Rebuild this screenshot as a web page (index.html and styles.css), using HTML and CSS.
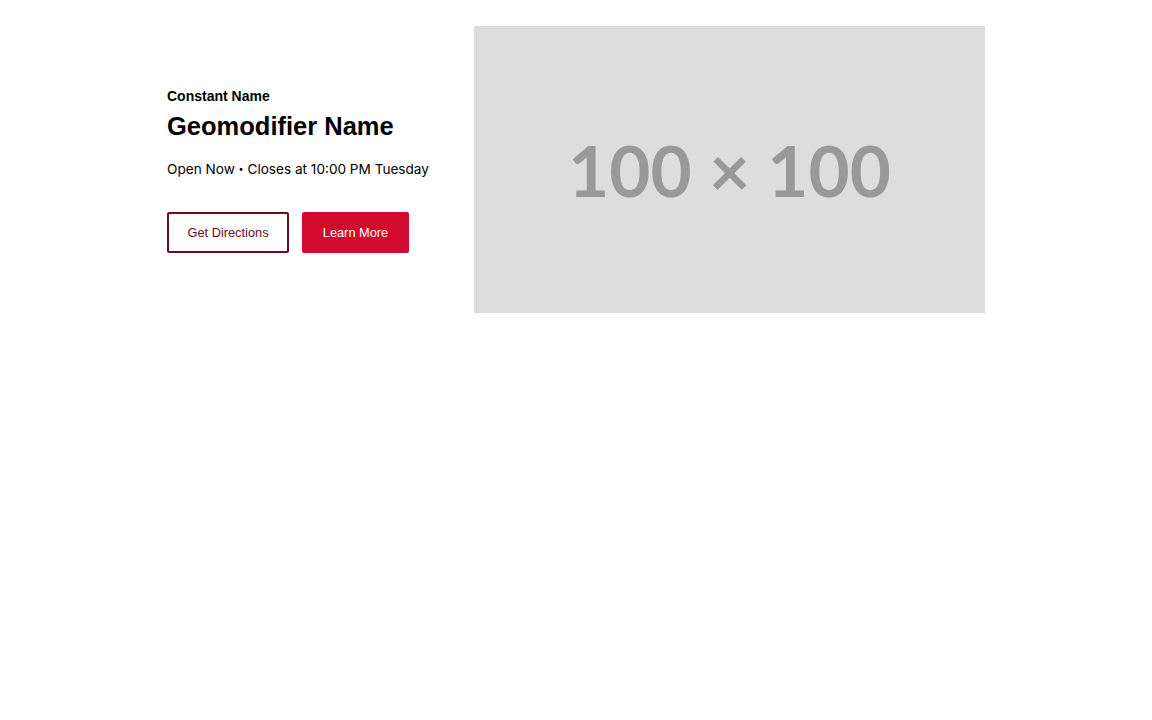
FILE: index.html
```html
<!DOCTYPE html>
<html lang="en">
<head>
<meta charset="utf-8">
<title>Location</title>
<link rel="stylesheet" href="styles.css">
</head>
<body>
<main class="hero">
  <section class="info">
    <div class="constant">Constant Name</div>
    <h1 class="geo">Geomodifier Name</h1>
    <div class="hours">Open Now <span class="dot">•</span> Closes at 10:00 PM Tuesday</div>
    <div class="actions">
      <a class="btn btn-outline" href="#">Get Directions</a>
      <a class="btn btn-solid" href="#">Learn More</a>
    </div>
  </section>
  <div class="placeholder"><span>100 × 100</span></div>
</main>
</body>
</html>
```
FILE: styles.css
```css
html, body { margin: 0; padding: 0; background: #fff; }
body { font-family: "Liberation Sans", Arial, sans-serif; color: #000; }
.hero {
  width: 818px;
  margin: 26px auto 0;
  display: flex;
  align-items: center;
}
.info {
  width: 307px;
  flex: none;
  display: flex;
  flex-direction: column;
  align-items: flex-start;
}
.constant { font-size: 14px; font-weight: 700; line-height: 18px; }
.geo { margin: 5px 0 0; font-size: 25.5px; font-weight: 700; line-height: 32px; }
.hours {
  margin-top: 17px;
  font-family: Inter, "Noto Sans", sans-serif;
  font-size: 13.6px;
  line-height: 20px;
}
.dot { font-size: 9px; vertical-align: 2px; }
.actions { margin-top: 33px; display: flex; gap: 13px; }
.btn {
  box-sizing: border-box;
  height: 41px;
  display: inline-flex;
  align-items: center;
  justify-content: center;
  font-size: 12.8px;
  text-decoration: none;
  border-radius: 2px;
}
.btn-outline { width: 122px; border: 2px solid #6e0a1f; color: #6e0a1f; background: #fff; }
.btn-solid { width: 107px; background: #d20a2e; color: #fff; }
.placeholder {
  width: 511px;
  height: 287px;
  flex: none;
  background: #dddddd;
  display: flex;
  align-items: center;
  justify-content: center;
}
.placeholder span {
  font-family: Lato, "Noto Sans", sans-serif;
  font-weight: 700;
  font-size: 71px;
  color: #999999;
  line-height: 1;
}
```
